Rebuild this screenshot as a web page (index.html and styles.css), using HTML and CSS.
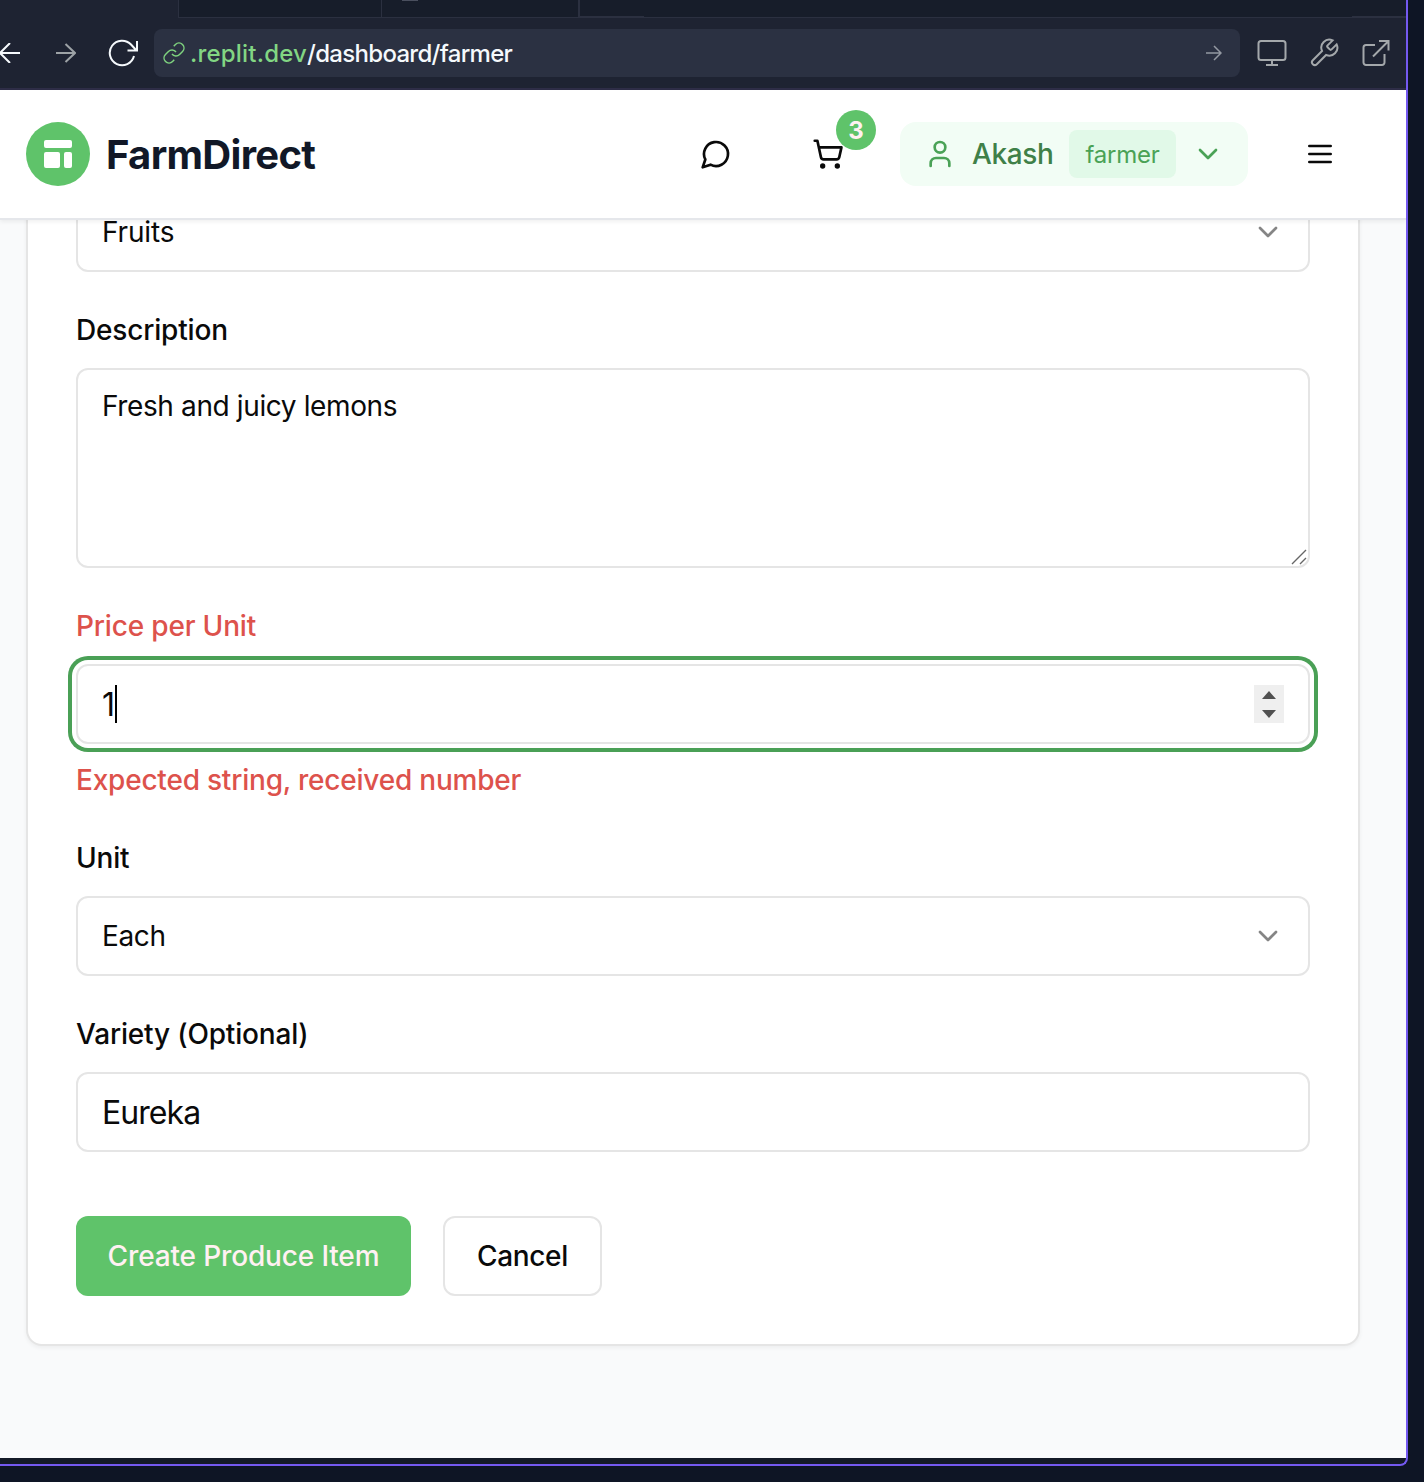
FILE: index.html
```html
<!DOCTYPE html>
<html lang="en">
<head>
<meta charset="utf-8">
<title>FarmDirect</title>
<link rel="stylesheet" href="styles.css">
</head>
<body>
<div class="pane">
  <div class="chrome">
    <div class="tabs"><div class="tab tab-first"></div><div class="tab tab-second"><span class="tab-mark"></span></div><div class="tab-rest"><span class="edge edge-start"></span><span class="edge edge-end"></span></div></div>
    <div class="toolbar">
      <svg class="back" viewBox="0 0 20 20"><path d="M20 10H0M10 0 0 10l10 10"/></svg>
      <svg class="forward" viewBox="0 0 20 20"><path d="M0 10h19M9.500 1l9.500 9-9.500 9"/></svg>
      <svg class="reload" viewBox="0 0 30 28"><path d="M29 2v9.500H19.500M28.500 11.500 23 5.500A12.300 12.300 0 1 0 26 17"/></svg>
      <div class="address">
        <svg class="link" viewBox="0 0 24 24"><path d="M10 13a5 5 0 0 0 7.540.540l3-3a5 5 0 0 0-7.070-7.070l-1.720 1.710M14 11a5 5 0 0 0-7.540-.540l-3 3a5 5 0 0 0 7.070 7.070l1.710-1.710"/></svg>
        <span class="url"><span class="host">.replit.dev</span><span class="path">/dashboard/farmer</span></span>
        <svg class="go" viewBox="0 0 16 16"><path d="M0 8h15M8 1l7 7-7 7"/></svg>
      </div>
      <svg class="tool monitor" viewBox="0 0 30 28"><rect x="1.500" y="2" width="27" height="19" rx="2.500"/><path d="M15 21v5M9 26h12"/></svg>
      <svg class="tool wrench" viewBox="0 0 24 24"><path d="M14.700 6.300a1 1 0 0 0 0 1.400l1.600 1.600a1 1 0 0 0 1.400 0l3.770-3.770a6 6 0 0 1-7.940 7.940l-6.910 6.910a2.120 2.120 0 0 1-3-3l6.910-6.910a6 6 0 0 1 7.940-7.940l-3.760 3.760z"/></svg>
      <svg class="tool external" viewBox="0 0 28 28"><path d="M13 6H4a2.500 2.500 0 0 0-2.500 2.500v15A2.500 2.500 0 0 0 4 26h16a2.500 2.500 0 0 0 2.500-2.500V15M17 2h9.500v9.500M26.500 2 11 17.500"/></svg>
    </div>
  </div>

  <header class="header">
    <div class="logo"><svg viewBox="0 0 28 28"><rect width="28" height="8" rx="2"/><rect y="12" width="16" height="16" rx="2"/><rect x="20" y="12" width="8" height="16" rx="2"/></svg></div>
    <div class="brand">FarmDirect</div>
    <svg class="icon chat" viewBox="0 0 24 24"><path d="M7.900 20A9 9 0 1 0 4 16.100L2 22Z"/></svg>
    <div class="cart">
      <svg class="icon" viewBox="0 0 24 24"><circle cx="8" cy="21" r="1"/><circle cx="19" cy="21" r="1"/><path d="M2.050 2.050h2l2.660 12.420a2 2 0 0 0 2 1.580h9.780a2 2 0 0 0 1.950-1.570l1.650-7.430H5.120"/></svg>
      <span class="badge">3</span>
    </div>
    <div class="account">
      <svg class="icon" viewBox="0 0 24 24"><path d="M19 21v-2a4 4 0 0 0-4-4H9a4 4 0 0 0-4 4v2"/><circle cx="12" cy="7" r="4"/></svg>
      <span class="name">Akash</span>
      <span class="role">farmer</span>
      <svg class="icon" viewBox="0 0 24 24"><path d="m6 9 6 6 6-6"/></svg>
    </div>
    <svg class="icon menu" viewBox="0 0 24 24"><path d="M4 12h16M4 6h16M4 18h16"/></svg>
  </header>

  <main class="page">
    <form class="card">
      <div class="field">
        <div class="control select"><span class="category">Fruits</span><svg class="icon chevron" viewBox="0 0 24 24"><path d="m6 9 6 6 6-6"/></svg></div>
      </div>
      <div class="field">
        <div class="label">Description</div>
        <div class="control area"><span>Fresh and juicy lemons</span><svg class="grip" viewBox="0 0 16 16"><path d="M1 15 15 1M9 15l6-6"/></svg></div>
      </div>
      <div class="field">
        <div class="label error">Price per Unit</div>
        <div class="control input focused"><span class="digits">1</span><span class="caret"></span>
          <svg class="spinner" viewBox="0 0 30 38"><path d="m15 6 7 8H8zM15 33l7-8H8z"/></svg></div>
        <div class="message error">Expected string, received number</div>
      </div>
      <div class="field">
        <div class="label">Unit</div>
        <div class="control select"><span>Each</span><svg class="icon chevron" viewBox="0 0 24 24"><path d="m6 9 6 6 6-6"/></svg></div>
      </div>
      <div class="field">
        <div class="label">Variety (Optional)</div>
        <div class="control input"><span>Eureka</span></div>
      </div>
      <div class="actions">
        <div class="button primary">Create Produce Item</div>
        <div class="button">Cancel</div>
      </div>
    </form>
  </main>
</div>
</body>
</html>
```
FILE: styles.css
```css
* { box-sizing: border-box; }
body {
  margin: 0;
  height: 1482px;
  overflow: hidden;
  background: #0e1525;
  color: #0a0a0a;
  font-family: Inter, "Liberation Sans", sans-serif;
  font-size: 28px;
}
svg { display: block; flex: none; fill: none; stroke: currentColor; }
.pane {
  width: 1408px;
  height: 1466px;
  overflow: hidden;
  display: flex;
  flex-direction: column;
  background: #141a27;
  border-right: 2px solid #7459f0;
  border-bottom: 2px solid #7459f0;
  border-bottom-right-radius: 8px;
}

/* Browser chrome */
.chrome { height: 90px; flex: none; background: #1e2332; border-bottom: 2px solid #2e2d47; }
.tabs { height: 18px; margin-left: 178px; display: flex; background: #171d2a; border-bottom: 1px solid #2b3040; }
.tab { border-left: 1px solid #2b3040; width: 203px; }
.tab-second { width: 197px; padding-left: 20px; }
.tab-mark { display: block; width: 16px; height: 1px; background: #4a4f5e; }
.tab-rest { flex: 1; display: flex; justify-content: space-between; align-items: flex-end; border-left: 2px solid #2b3040; }
.edge { height: 1px; background: #2b3040; }
.edge-start { width: 64px; }
.edge-end { width: 54px; }
.toolbar { height: 70px; display: flex; align-items: center; color: #f5f9fc; stroke-width: 2; }
.back { width: 20px; height: 20px; }
.forward { width: 20px; height: 20px; margin-left: 36px; color: #9da2a6; }
.reload { width: 30px; height: 28px; margin-left: 32px; }
.address {
  width: 1086px; height: 48px; margin-left: 16px; padding: 0 18px 0 8px;
  display: flex; align-items: center; background: #2b3142; border-radius: 8px;
}
.link { width: 24px; height: 24px; color: #7fd37f; stroke-width: 1.5; }
.url { margin-left: 4px; padding-top: 1px; font-size: 24px; line-height: 32px; font-weight: 500; }
.host { color: #82d683; letter-spacing: .2px; }
.path { letter-spacing: -.7px; }
.go { width: 16px; height: 16px; margin-left: auto; color: #9499a2; stroke-width: 1.5; }
.tool { color: #a4a8ab; }
.monitor { width: 30px; height: 28px; margin-left: 17px; }
.wrench { width: 32px; height: 32px; margin-left: 21px; stroke-width: 1.5; }
.external { width: 28px; height: 28px; margin-left: 22px; }

/* Site header */
.icon { width: 32px; height: 32px; stroke-width: 2; stroke-linecap: round; stroke-linejoin: round; }
.header {
  position: relative; z-index: 1; height: 130px; flex: none; padding-left: 26px;
  display: flex; align-items: center; background: #fff;
  border-bottom: 2px solid #e5e7eb; box-shadow: 0 2px 4px rgba(0, 0, 0, .06);
}
.logo { width: 64px; height: 64px; border-radius: 50%; background: #5fc36a; display: grid; place-items: center; }
.logo svg { width: 28px; height: 28px; fill: #fff; stroke: none; }
.brand { width: 594px; padding: 2px 0 0 16px; font-size: 40px; font-weight: 700; line-height: 56px; color: #111827; letter-spacing: -.7px; }
.chat { margin-left: 16px; }
.cart { position: relative; margin-left: 80px; }
.badge {
  position: absolute; left: 24px; top: -28px; width: 40px; height: 40px; border-radius: 50%;
  background: #5fc36a; color: #fff1f2; font-size: 24px; font-weight: 700; line-height: 42px; text-align: center;
}
.account {
  width: 348px; height: 64px; margin-left: 56px; padding: 0 24px; border-radius: 16px;
  display: flex; align-items: center; background: #f2fdf5; color: #4aa256;
}
.name { width: 97px; padding: 0 0 0 16px; font-weight: 500; color: #3f8048; letter-spacing: -.4px; }
.role {
  width: 107px; height: 48px; margin: 0 16px; border-radius: 8px; background: #e1f9e8;
  font-size: 24px; line-height: 50px; text-align: center; letter-spacing: -.2px;
}
.menu { margin-left: 56px; }

/* Form: the page is scrolled, its upper part lies under the header */
.page { height: 1298px; margin-top: -60px; flex: none; overflow: hidden; background: #f9fafb; padding-left: 26px; }
.card {
  width: 1334px; margin-top: -16px; padding: 46px 48px 48px;
  display: flex; flex-direction: column; gap: 44px; background: #fff;
  border: 2px solid #e5e5e5; border-radius: 16px; box-shadow: 0 2px 4px rgba(0, 0, 0, .05);
}
.label { height: 28px; margin-bottom: 24px; line-height: 29px; font-weight: 500; letter-spacing: -.17px; }
.error { color: #dd524c; }
.message { height: 40px; margin-top: 16px; line-height: 41px; font-weight: 500; letter-spacing: -.21px; }
.control {
  height: 80px; padding: 0 24px; display: flex; align-items: center; letter-spacing: -.38px;
  background: #fff; border: 2px solid #e5e5e5; border-radius: 12px;
}
.select { justify-content: space-between; }
.category { letter-spacing: -.15px; }
.chevron { color: #858585; }
.area { position: relative; height: 200px; align-items: flex-start; padding-top: 16px; line-height: 41px; }
.grip { position: absolute; right: 1px; bottom: 1px; width: 16px; height: 16px; color: #666; stroke-width: 1.4; }
.input { font-size: 32px; letter-spacing: -.95px; }
.digits { letter-spacing: 0; }
.focused { box-shadow: 0 0 0 4px #fff, 0 0 0 8px #4aa056; }
.caret { width: 2px; height: 38px; background: #000; }
.spinner { width: 30px; height: 38px; margin-left: auto; background: #efefef; fill: #505050; stroke: none; }
.actions { display: flex; gap: 32px; margin-top: 20px; }
.button {
  width: 159px; height: 80px; display: grid; place-items: center;
  border: 2px solid #e5e5e5; border-radius: 12px; font-weight: 500; letter-spacing: -.35px;
}
.primary { width: 335px; border: 0; background: #5fc36a; color: #fff1f2; letter-spacing: -.15px; }
```
